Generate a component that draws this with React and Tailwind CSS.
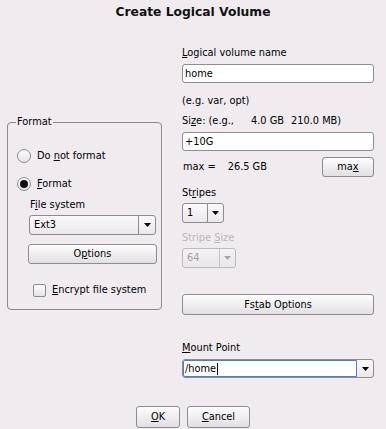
import React from "react";

const btn =
  "flex items-center justify-center rounded-[3px] border border-[#8f8c8f] bg-linear-to-b from-[#fefefe] to-[#e2dfe2] text-black";

function Arrow({ disabled }) {
  return (
    <svg width="7" height="4" viewBox="0 0 7 4">
      <polygon points="0,0 7,0 3.5,4" fill={disabled ? "#a9a6a9" : "#000"} />
    </svg>
  );
}

function Select({ value, w, arrowW = 16, disabled }) {
  return (
    <div
      className={
        "flex h-[20px] rounded-[3px] border bg-linear-to-b " +
        (disabled
          ? "border-[#bdbabd] from-[#f3f1f3] to-[#eae7ea] text-[#a3a0a3]"
          : "border-[#8f8c8f] from-[#fbfafb] to-[#ebe8eb] text-black")
      }
      style={{ width: w }}
    >
      <div className="flex flex-1 items-center pl-[4px]">{value}</div>
      <div
        className={
          "flex items-center justify-center border-l " +
          (disabled ? "border-[#c8c5c8]" : "border-[#8f8c8f]")
        }
        style={{ width: arrowW }}
      >
        <Arrow disabled={disabled} />
      </div>
    </div>
  );
}

function Input({ value }) {
  return (
    <div className="flex h-[19px] w-[192px] items-center rounded-[3px] border border-[#8f8c8f] bg-white pl-[2px] text-black">
      {value}
    </div>
  );
}

function Radio({ checked }) {
  return (
    <div className="flex h-[14px] w-[14px] items-center justify-center rounded-full border border-[#8d8a8d] bg-linear-to-b from-[#fefefe] to-[#e6e3e6]">
      {checked && <div className="h-[8px] w-[8px] rounded-full bg-[#111]" />}
    </div>
  );
}

export default function App() {
  return (
    <div
      className="flex h-[429px] w-[386px] flex-col bg-[#efebef] text-[9.8px] leading-[12px] text-black"
      style={{ fontFamily: '"DejaVu Sans", Verdana, sans-serif' }}
    >
      <div className="pt-[4px] text-center text-[12.3px] font-bold leading-[16px] text-[#111]">
        Create Logical Volume
      </div>

      <div className="mt-[27px] flex pl-[7px]">
        {/* Left: Format group */}
        <fieldset className="mt-[69px] flex w-[155px] flex-col self-start rounded-[4px] border border-[#8d8a8d] pb-[12px]">
          <legend className="ml-[8px] px-[1px] leading-[12px]">Format</legend>
          <div className="ml-[9px] mt-[21px] flex h-[14px] items-center gap-[6px]">
            <Radio />
            <span>
              Do <u>n</u>ot format
            </span>
          </div>
          <div className="ml-[9px] mt-[14px] flex h-[14px] items-center gap-[6px]">
            <Radio checked />
            <span>
              <u>F</u>ormat
            </span>
          </div>
          <div className="ml-[22px] mt-[8px]">
            F<u>i</u>le system
          </div>
          <div className="ml-[21px] mt-[4px]">
            <Select value="Ext3" w={127} arrowW={17} />
          </div>
          <div className={btn + " ml-[20px] mt-[9px] h-[20px] w-[129px]"}>
            <span>
              O<u>p</u>tions
            </span>
          </div>
          <div className="ml-[25px] mt-[19px] flex h-[14px] items-center gap-[6px]">
            <div className="h-[13px] w-[13px] rounded-[2px] border border-[#8d8a8d] bg-linear-to-b from-[#fefefe] to-[#e6e3e6]" />
            <span>
              <u>E</u>ncrypt file system
            </span>
          </div>
        </fieldset>

        {/* Right column */}
        <div className="ml-[20px] flex w-[192px] flex-col">
          <div>
            <u>L</u>ogical volume name
          </div>
          <div className="mt-[5px]">
            <Input value="home" />
          </div>
          <div className="mt-[12px]">(e.g. var, opt)</div>
          <div className="mt-[8px] whitespace-pre">
            Si<u>z</u>e: (e.g.,<span className="ml-[17px]">4.0 GB</span>
            <span className="ml-[7px]">210.0 MB)</span>
          </div>
          <div className="mt-[5px]">
            <Input value="+10G" />
          </div>
          <div className="mt-[6px] flex h-[20px] items-center justify-between">
            <span className="pl-[1px]">
              max =<span className="ml-[12px]">26.5 GB</span>
            </span>
            <div className={btn + " h-[20px] w-[52px]"}>
              <span>
                ma<u>x</u>
              </span>
            </div>
          </div>
          <div className="mt-[10px]">
            St<u>r</u>ipes
          </div>
          <div className="mt-[4px]">
            <Select value="1" w={42} />
          </div>
          <div className="mt-[9px] text-[#bab7ba]">
            Stripe <u>S</u>ize
          </div>
          <div className="mt-[4px]">
            <Select value="64" w={54} disabled />
          </div>
          <div className={btn + " mt-[26px] h-[21px] w-[192px]"}>
            <span>
              Fs<u>t</u>ab Options
            </span>
          </div>
          <div className="mt-[27px]">
            <u>M</u>ount Point
          </div>
          <div className="mt-[5px] flex h-[19px] w-[192px] rounded-[3px] border border-[#8f8c8f] bg-linear-to-b from-[#fbfafb] to-[#ebe8eb]">
            <div className="flex flex-1 items-center rounded-l-[2px] border border-[#4d7fcb] bg-white pl-[1px]">
              <span>/home</span>
              <span className="ml-[1px] inline-block h-[12px] w-[1px] bg-black" />
            </div>
            <div className="flex w-[16px] items-center justify-center">
              <Arrow />
            </div>
          </div>
        </div>
      </div>

      <div className="mt-[28px] flex justify-center gap-[7px]">
        <div className={btn + " h-[22px] w-[44px]"}>
          <span>
            <u>O</u>K
          </span>
        </div>
        <div className={btn + " h-[22px] w-[63px]"}>
          <span>
            <u>C</u>ancel
          </span>
        </div>
      </div>
    </div>
  );
}
